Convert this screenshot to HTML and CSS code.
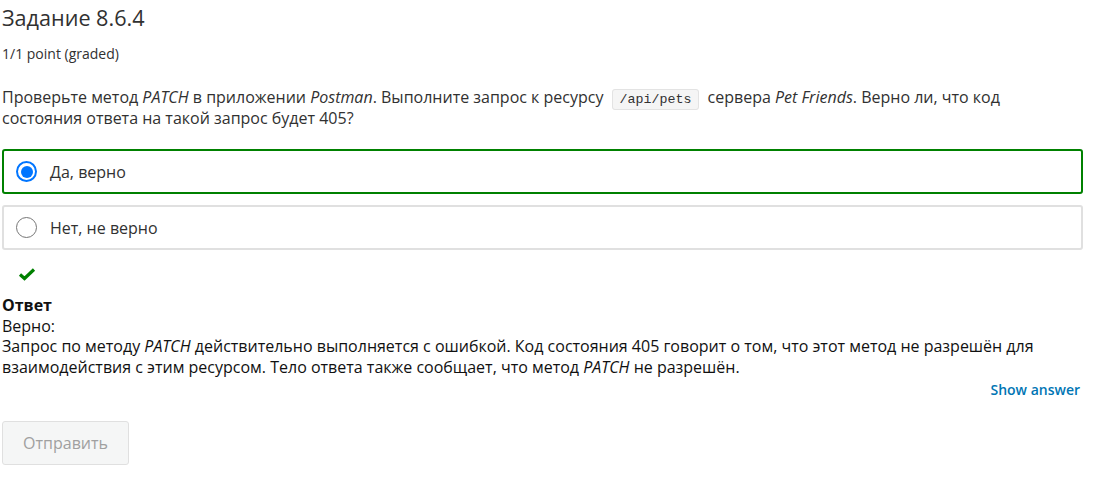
FILE: index.html
```html
<!DOCTYPE html>
<html lang="ru">
<head>
<meta charset="utf-8">
<link rel="stylesheet" href="styles.css">
</head>
<body>
<div class="problem">
  <h3 class="title">Задание 8.6.4</h3>
  <div class="points">1/1 point (graded)</div>
  <p class="question">Проверьте метод <em>PATCH</em> в приложении <em>Postman</em>. Выполните запрос к ресурсу <code>/api/pets</code> сервера <em>Pet Friends</em>. Верно ли, что код состояния ответа на такой запрос будет 405?</p>
  <div class="options">
    <label class="option correct">
      <span class="radio checked"></span>
      <span>Да, верно</span>
    </label>
    <label class="option">
      <span class="radio"></span>
      <span>Нет, не верно</span>
    </label>
  </div>
  <div class="status">
    <svg width="18" height="14" viewBox="0 0 18 14"><path d="M2 7.5 L6.5 11.5 L16 2.5" fill="none" stroke="#008100" stroke-width="3.2"/></svg>
  </div>
  <div class="answer">
    <div class="answer-title">Ответ</div>
    <div>Верно:</div>
    <div>Запрос по методу <em>PATCH</em> действительно выполняется с ошибкой. Код состояния 405 говорит о том, что этот метод не разрешён для взаимодействия с этим ресурсом. Тело ответа также сообщает, что метод <em>PATCH</em> не разрешён.</div>
  </div>
  <div class="actions">
    <a class="show-answer">Show answer</a>
  </div>
  <button class="submit" disabled>Отправить</button>
</div>
</body>
</html>
```

FILE: styles.css
```css
body {
  margin: 0;
  background: #fff;
  font-family: "Open Sans", sans-serif;
  color: #313131;
}
.problem {
  width: 1081px;
  padding: 0 0 0 2px;
}
.title {
  margin: 0;
  padding-top: 3px;
  font-size: 21.6px;
  font-weight: 400;
  line-height: 30px;
  color: #313131;
}
.points {
  margin-top: 12px;
  font-size: 14px;
  line-height: 18px;
  color: #313131;
}
.question {
  margin: 24px 0 0;
  width: 1060px;
  font-size: 16px;
  line-height: 21px;
  color: #313131;
}
code {
  font-family: "Liberation Mono", monospace;
  font-size: 13.3px;
  line-height: 1;
  background: #f5f5f5;
  border: 1px solid #e3e3e3;
  border-radius: 3px;
  padding: 2px 7px;
  margin: 0 4px;
}
.options {
  margin-top: 20px;
  display: flex;
  flex-direction: column;
  gap: 11px;
}
.option {
  display: flex;
  align-items: center;
  gap: 13px;
  height: 45px;
  box-sizing: border-box;
  border: 2px solid #e0e0e0;
  border-radius: 3px;
  padding-left: 12px;
  font-size: 16px;
}
.option.correct {
  border-color: #008100;
}
.radio {
  width: 21px;
  height: 21px;
  box-sizing: border-box;
  border: 1px solid #767676;
  border-radius: 50%;
  position: relative;
  flex: none;
}
.radio.checked {
  border: 2px solid #0075ff;
}
.radio.checked::after {
  content: "";
  position: absolute;
  left: 2.5px;
  top: 2.5px;
  width: 12px;
  height: 12px;
  border-radius: 50%;
  background: #0075ff;
}
.status {
  padding: 14px 0 0 16px;
  height: 18px;
}
.answer {
  margin-top: 13px;
  font-size: 16px;
  line-height: 20.7px;
  color: #111;
}
.answer-title {
  font-weight: 700;
}
.actions {
  display: flex;
  justify-content: flex-end;
  padding-right: 3px;
  margin-top: 2px;
}
.show-answer {
  font-size: 14px;
  font-weight: 600;
  color: #0075b4;
  line-height: 20px;
}
.submit {
  margin-top: 21px;
  font-family: "Open Sans", sans-serif;
  font-size: 16px;
  color: #a0a0a0;
  background: #f5f6f6;
  border: 1px solid #e0e0e0;
  border-radius: 3px;
  width: 127px;
  height: 44px;
}
```
